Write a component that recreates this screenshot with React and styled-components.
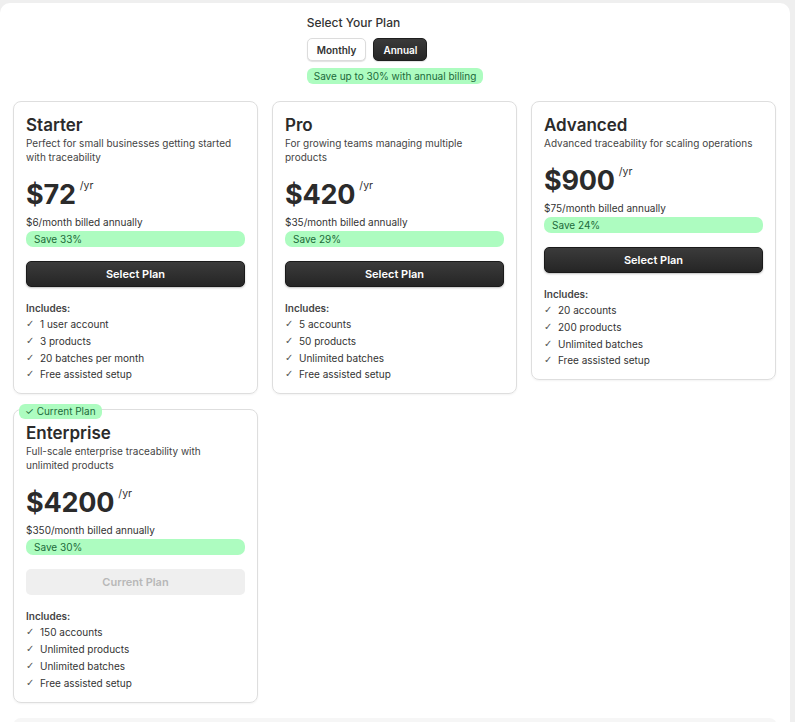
import React from "react";
import styled, { createGlobalStyle } from "styled-components";

const Global = createGlobalStyle`
  html, body { margin: 0; padding: 0; background: #efefef; }
  body { font-family: Inter, "Noto Sans", sans-serif; color: #2b2b2b; overflow: hidden; }
`;

const Panel = styled.div`
  margin: 3px 5px 0 0;
  width: 790px;
  min-height: 740px;
  background: #fff;
  border-radius: 10px;
  box-sizing: border-box;
  padding: 13px 13px 0 13px;
`;

const Header = styled.div`
  display: flex;
  justify-content: center;
  margin-bottom: 17px;
`;

const HeaderInner = styled.div`
  display: flex;
  flex-direction: column;
  align-items: flex-start;
`;

const Heading = styled.div`
  font-size: 12px;
  font-weight: 500;
  color: #333;
  margin: 0 0 8px 0;
  line-height: 14px;
`;

const Toggle = styled.div`
  display: flex;
  gap: 7px;
  margin-bottom: 7px;
`;

const ToggleBtn = styled.button`
  font-family: inherit;
  font-size: 10px;
  font-weight: 600;
  height: 23px;
  padding: 0 9px;
  border-radius: 5px;
  cursor: pointer;
  border: 1px solid ${p => (p.$active ? "#1e1e1e" : "#dcdcdc")};
  background: ${p => (p.$active ? "linear-gradient(#3a3a3a, #262626)" : "#fff")};
  color: ${p => (p.$active ? "#fff" : "#333")};
  box-shadow: 0 1px 1px rgba(0,0,0,0.12);
`;

const Pill = styled.div`
  background: #adfcc0;
  color: #1c6a3a;
  font-size: 10px;
  line-height: 16px;
  padding: 0 7px 0 7px;
  border-radius: 6px;
`;

const Grid = styled.div`
  display: grid;
  grid-template-columns: repeat(3, 245px);
  column-gap: 14px;
  row-gap: 15px;
  align-items: start;
`;

const Card = styled.div`
  position: relative;
  border: 1px solid #dedede;
  border-radius: 8px;
  padding: 12px 12px 12px 12px;
  box-sizing: border-box;
  box-shadow: 0 1px 2px rgba(0,0,0,0.05);
`;

const CurrentTag = styled.div`
  position: absolute;
  top: -6px;
  left: 5px;
  background: #adfcc0;
  color: #1c6a3a;
  font-size: 10px;
  line-height: 15px;
  padding: 0 6px 0 6px;
  border-radius: 6px;
`;

const Title = styled.div`
  font-size: 17px;
  font-weight: 600;
  color: #2b2b2b;
  line-height: 22px;
`;

const Desc = styled.div`
  font-size: 10px;
  color: #444;
  line-height: 14px;
`;

const PriceRow = styled.div`
  display: flex;
  align-items: flex-start;
  margin-top: 14px;
  height: 34px;
`;

const Price = styled.span`
  font-size: 27px;
  font-weight: 700;
  color: #2b2b2b;
  line-height: 34px;
  letter-spacing: -0.2px;
`;

const Per = styled.span`
  font-size: 10.5px;
  color: #333;
  margin-left: 4px;
  margin-top: 1px;
`;

const Monthly = styled.div`
  font-size: 10px;
  color: #333;
  line-height: 14px;
  margin-top: 3px;
`;

const Save = styled(Pill)`
  margin-top: 2px;
  padding: 0 8px;
  border-radius: 7px;
`;

const ActionBtn = styled.button`
  display: block;
  width: 100%;
  margin-top: 14px;
  height: 26px;
  border-radius: 5px;
  font-family: inherit;
  font-size: 11px;
  font-weight: 600;
  cursor: pointer;
  border: ${p => (p.$current ? "none" : "1px solid #1a1a1a")};
  background: ${p => (p.$current ? "#efefef" : "linear-gradient(#3b3b3b, #252525)")};
  color: ${p => (p.$current ? "#b8b8b8" : "#fff")};
  box-shadow: ${p => (p.$current ? "none" : "0 1px 2px rgba(0,0,0,0.25)")};
`;

const Includes = styled.div`
  font-size: 10px;
  font-weight: 600;
  color: #444;
  margin-top: 14px;
  line-height: 14px;
`;

const List = styled.ul`
  list-style: none;
  margin: 2px 0 0 0;
  padding: 0;
  display: flex;
  flex-direction: column;
  gap: 2.8px;
`;

const Item = styled.li`
  font-size: 10px;
  color: #333;
  line-height: 14px;
  display: flex;
  align-items: center;
  gap: 6px;
`;

const Check = styled.span`
  font-family: "DejaVu Sans", sans-serif;
  font-size: 10px;
  color: #555;
  width: 8px;
`;

const FooterBox = styled.div`
  margin-top: 15px;
  height: 40px;
  background: #f6f6f6;
  border-radius: 8px;
`;

const plans = [
  {
    name: "Starter",
    desc: "Perfect for small businesses getting started with traceability",
    price: "$72",
    monthly: "$6/month billed annually",
    save: "Save 33%",
    items: ["1 user account", "3 products", "20 batches per month", "Free assisted setup"],
  },
  {
    name: "Pro",
    desc: "For growing teams managing multiple products",
    price: "$420",
    monthly: "$35/month billed annually",
    save: "Save 29%",
    items: ["5 accounts", "50 products", "Unlimited batches", "Free assisted setup"],
  },
  {
    name: "Advanced",
    desc: "Advanced traceability for scaling operations",
    price: "$900",
    monthly: "$75/month billed annually",
    save: "Save 24%",
    items: ["20 accounts", "200 products", "Unlimited batches", "Free assisted setup"],
  },
  {
    name: "Enterprise",
    desc: "Full-scale enterprise traceability with unlimited products",
    price: "$4200",
    monthly: "$350/month billed annually",
    save: "Save 30%",
    current: true,
    items: ["150 accounts", "Unlimited products", "Unlimited batches", "Free assisted setup"],
  },
];

function PlanCard({ plan }) {
  return (
    <Card>
      {plan.current && <CurrentTag>✓ Current Plan</CurrentTag>}
      <Title>{plan.name}</Title>
      <Desc>{plan.desc}</Desc>
      <PriceRow>
        <Price>{plan.price}</Price>
        <Per>/yr</Per>
      </PriceRow>
      <Monthly>{plan.monthly}</Monthly>
      <Save>{plan.save}</Save>
      <ActionBtn $current={plan.current}>{plan.current ? "Current Plan" : "Select Plan"}</ActionBtn>
      <Includes>Includes:</Includes>
      <List>
        {plan.items.map(i => (
          <Item key={i}>
            <Check>✓</Check>
            {i}
          </Item>
        ))}
      </List>
    </Card>
  );
}

export default function App() {
  return (
    <>
      <Global />
      <Panel>
        <Header>
          <HeaderInner>
            <Heading>Select Your Plan</Heading>
            <Toggle>
              <ToggleBtn>Monthly</ToggleBtn>
              <ToggleBtn $active>Annual</ToggleBtn>
            </Toggle>
            <Pill>Save up to 30% with annual billing</Pill>
          </HeaderInner>
        </Header>
        <Grid>
          {plans.map(p => (
            <PlanCard key={p.name} plan={p} />
          ))}
        </Grid>
        <FooterBox />
      </Panel>
    </>
  );
}
